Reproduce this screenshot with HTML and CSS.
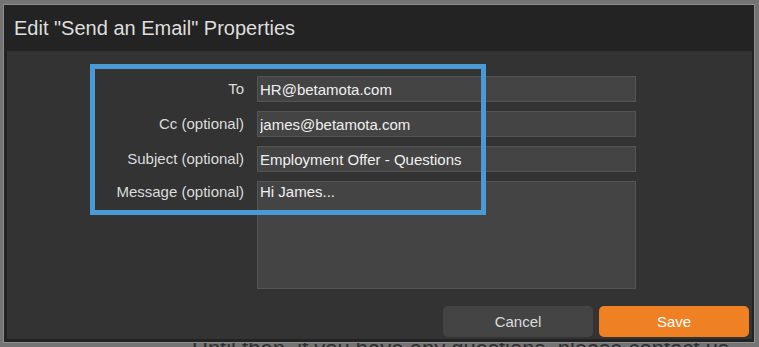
FILE: index.html
```html
<!DOCTYPE html>
<html lang="en">
<head>
  <meta charset="UTF-8">
  <meta name="viewport" content="width=device-width, initial-scale=1.0">
  <title>Edit Properties</title>

  <link rel="stylesheet" href="styles.css">
</head>
<body>
  <div id="page">
    <p class="page_text">Until then, if you have any questions, please contact us.</p>
  </div>

  <div id="dialog">
    <div class="dialog_title">Edit "Send an Email" Properties</div>
    <div class="dialog_body">
      <div class="form">
        <label class="field_label">To</label>
        <input class="field" value="HR@betamota.com">
        <label class="field_label">Cc (optional)</label>
        <input class="field" value="james@betamota.com">
        <label class="field_label">Subject (optional)</label>
        <input class="field" value="Employment Offer - Questions">
        <label class="field_label msg_label">Message (optional)</label>
        <textarea class="field msg">Hi James...</textarea>
      </div>
      <div class="actions">
        <button class="btn">Cancel</button>
        <button class="btn save_btn">Save</button>
      </div>
      <div class="highlight"></div>
    </div>
  </div>
</body>
</html>
```

FILE: styles.css
```css
body{
  margin: 0;
  background-color: #747474;
  font-family: "Liberation Sans", Arial, sans-serif;
  overflow: hidden;
}

#page{
  height: 347px;
  padding-left: 192px;
}

.page_text{
  margin: 0;
  padding-top: 336px;
  font-size: 22px;
  color: #2e2e2e;
  white-space: nowrap;
}

#dialog{
  position: absolute;
  left: 3px;
  top: 4px;
  width: 745px;
  height: 334px;
  border: 1px solid #8e8e8e;
  background-color: #232323;
  padding: 0 2px 3px 3px;
  display: flex;
  flex-direction: column;
}

.dialog_title{
  height: 46px;
  line-height: 46px;
  padding-left: 7px;
  font-size: 20px;
  color: #dedede;
}

.dialog_body{
  position: relative;
  flex: 1;
  background-color: #333333;
  display: flex;
  flex-direction: column;
  padding: 25px 3px 2px 0;
}

.form{
  display: grid;
  grid-template-columns: 237px 379px;
  grid-template-rows: 26px 26px 26px 108px;
  column-gap: 13px;
  row-gap: 9px;
}

.field_label{
  text-align: right;
  font-size: 15px;
  line-height: 26px;
  color: #dcdcdc;
}

.msg_label{
  line-height: 21px;
}

.field{
  box-sizing: border-box;
  width: 100%;
  height: 100%;
  margin: 0;
  border: 1px solid #555555;
  background-color: #444444;
  color: #f0f0f0;
  font-family: "Liberation Sans", Arial, sans-serif;
  font-size: 15px;
  padding: 0 2px;
  outline: none;
}

.msg{
  resize: none;
  padding: 1px 2px;
  line-height: 17px;
}

.actions{
  margin-top: auto;
  display: flex;
  justify-content: flex-end;
  gap: 6px;
}

.btn{
  width: 150px;
  height: 31px;
  border: none;
  border-radius: 5px;
  background-color: #444444;
  color: #dcdcdc;
  font-family: "Liberation Sans", Arial, sans-serif;
  font-size: 15px;
  cursor: pointer;
}

.save_btn{
  background-color: #ef8024;
  color: white;
}

.highlight{
  position: absolute;
  left: 83px;
  top: 13px;
  width: 386px;
  height: 141px;
  border: 5px solid #4a9bd5;
}
```
